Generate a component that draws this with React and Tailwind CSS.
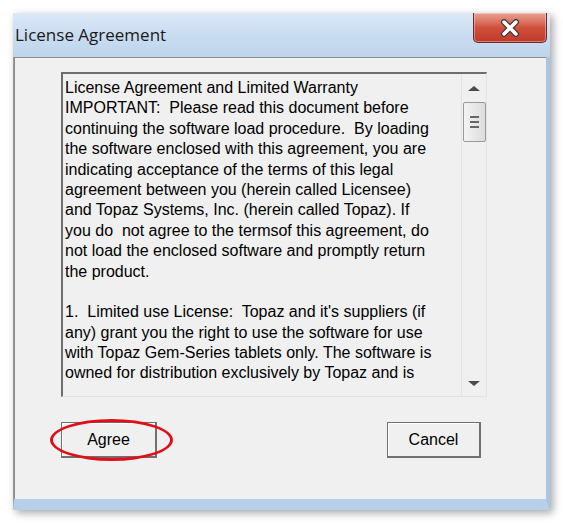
import React from 'react';

const lines = [
  'License Agreement and Limited Warranty',
  'IMPORTANT:  Please read this document before',
  'continuing the software load procedure.  By loading',
  'the software enclosed with this agreement, you are',
  'indicating acceptance of the terms of this legal',
  'agreement between you (herein called Licensee)',
  'and Topaz Systems, Inc. (herein called Topaz). If',
  'you do  not agree to the termsof this agreement, do',
  'not load the enclosed software and promptly return',
  'the product.',
  '',
  "1.  Limited use License:  Topaz and it's suppliers (if",
  'any) grant you the right to use the software for use',
  'with Topaz Gem-Series tablets only. The software is',
  'owned for distribution exclusively by Topaz and is',
];

function CloseButton() {
  return (
    <div className="flex h-[30px] w-[74px] items-center justify-center rounded-b-[5px] border border-t-0 border-[#6b2a22] bg-gradient-to-b from-[#e8a295] via-[#d0503b] to-[#c0392b] shadow-[inset_0_0_0_1px_rgba(255,255,255,0.35)]">
      <svg width="22" height="18" viewBox="0 0 22 18">
        <path d="M5 3 L17 15 M17 3 L5 15" stroke="#3a3a3a" strokeWidth="6" strokeLinecap="round" />
        <path d="M5 3 L17 15 M17 3 L5 15" stroke="#ffffff" strokeWidth="3.5" strokeLinecap="round" />
      </svg>
    </div>
  );
}

function Scrollbar() {
  return (
    <div className="flex w-[25px] flex-col items-center border-l border-[#e4e4e4] bg-[#f0f0f0]">
      <div className="flex h-[28px] w-full items-center justify-center">
        <div className="h-0 w-0 border-x-[6px] border-b-[5px] border-x-transparent border-b-[#4a4a4a]" />
      </div>
      <div className="flex h-[40px] w-[23px] flex-col items-center justify-center gap-[3px] rounded-[2px] border border-[#9a9a9a] bg-gradient-to-r from-[#f4f4f4] to-[#dcdcdc]">
        <div className="h-[2px] w-[9px] bg-[#666]" />
        <div className="h-[2px] w-[9px] bg-[#666]" />
        <div className="h-[2px] w-[9px] bg-[#666]" />
      </div>
      <div className="flex-1" />
      <div className="flex h-[26px] w-full items-center justify-center">
        <div className="h-0 w-0 border-x-[6px] border-t-[5px] border-x-transparent border-t-[#4a4a4a]" />
      </div>
    </div>
  );
}

export default function App() {
  return (
    <div className="h-[524px] w-[563px] overflow-hidden bg-white pl-[13px] pt-[13px] font-['Liberation_Sans',Arial,sans-serif]">
      <div className="flex h-[497px] w-[537px] flex-col shadow-[3px_3px_8px_rgba(0,0,0,0.35)]">
        <div className="flex h-[44px] items-start justify-between bg-gradient-to-b from-[#dce9f7] via-[#c9dcf1] to-[#bed4ec] pl-[2px]">
          <div className="pt-[11px] font-['Open_Sans',sans-serif] text-[17px] leading-[22px] text-[#1a1a1a]">License Agreement</div>
          <div className="mr-[3px]">
            <CloseButton />
          </div>
        </div>
        <div className="flex flex-1 border-b-[11px] border-l border-r-4 border-b-[#b7cfe9] border-l-[#9a9a9a] border-r-[#aac4e2]">
          <div className="flex flex-1 flex-col border-l border-t border-[#8a8a8a] bg-[#f0f0f0] pl-[46px] pr-[59px] pt-[14px]">
            <div className="flex h-[325px] border-b border-l-2 border-r border-t-2 border-b-[#e3e3e3] border-l-[#6d6d6d] border-r-[#e3e3e3] border-t-[#6d6d6d]">
              <div className="flex-1 whitespace-pre pl-[2px] pt-[4px] text-[16px] leading-[20.4px] text-black">
                {lines.map((l, i) => (
                  <div key={i} className="h-[20.4px]">{l}</div>
                ))}
              </div>
              <Scrollbar />
            </div>
            <div className="mt-[25px] flex justify-between">
              <div className="relative">
                <button className="h-[36px] w-[96px] border border-[#707070] border-b-2 border-r-2 bg-[#f0f0f0] text-[16px] text-black shadow-[inset_1px_1px_0_#fff]">
                  Agree
                </button>
                <div className="pointer-events-none absolute left-[-11px] top-[-3px] h-[42px] w-[123px] rounded-[50%] border-[3px] border-[#e0101a]" />
              </div>
              <button className="mr-[6px] h-[36px] w-[94px] border border-[#707070] border-b-2 border-r-2 bg-[#f0f0f0] text-[16px] text-black shadow-[inset_1px_1px_0_#fff]">
                Cancel
              </button>
            </div>
          </div>
        </div>
      </div>
    </div>
  );
}
